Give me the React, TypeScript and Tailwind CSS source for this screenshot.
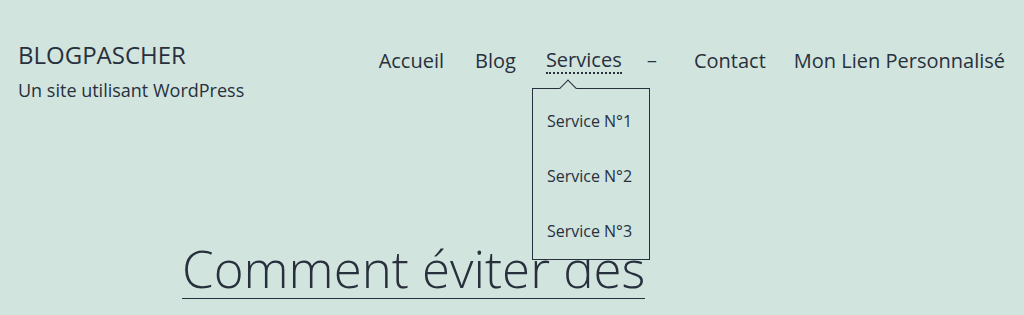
import React from 'react';

const font = { fontFamily: '"Open Sans", "Noto Sans", sans-serif' };

const App = () => {
  return (
    <div className="relative w-full h-[315px] overflow-hidden bg-[#d1e4dd] text-[#28303d]" style={font}>
      <header className="flex justify-between items-start pl-[18px] pr-[19px] pt-[40px]">
        <div>
          <p className="text-[24px] leading-[30px]">BLOGPASCHER</p>
          <p className="mt-[8px] text-[18px] leading-[24px]">Un site utilisant WordPress</p>
        </div>
        <nav className="pt-[8px]">
          <ul className="flex items-center text-[20px] leading-[26px]">
            <li>Accueil</li>
            <li className="ml-[31px]">Blog</li>
            <li className="relative ml-[30px] flex items-center">
              <span className="border-b-2 border-dotted border-[#28303d] leading-[24px]">Services</span>
              <span className="ml-[25px] text-[18px]">−</span>
              <div className="absolute left-[-14px] top-[40px] w-[118px] h-[172px] border border-[#28303d] bg-[#d1e4dd] z-10">
                <div className="absolute left-[29px] top-[-7px] w-[12px] h-[12px] rotate-45 border-l border-t border-[#28303d] bg-[#d1e4dd]" />
                <ul className="relative flex flex-col pt-[21px] pl-[14px] text-[16px] leading-[22px] gap-[33px]">
                  <li>Service N°1</li>
                  <li>Service N°2</li>
                  <li>Service N°3</li>
                </ul>
              </div>
            </li>
            <li className="ml-[37px]">Contact</li>
            <li className="ml-[28px]">Mon Lien Personnalisé</li>
          </ul>
        </nav>
      </header>
      <main className="pl-[182px] pt-[137px]">
        <h1 className="inline-block text-[51px] leading-[59px] font-light border-b border-[#28303d]">Comment éviter des</h1>
      </main>
    </div>
  );
};

export default App;
